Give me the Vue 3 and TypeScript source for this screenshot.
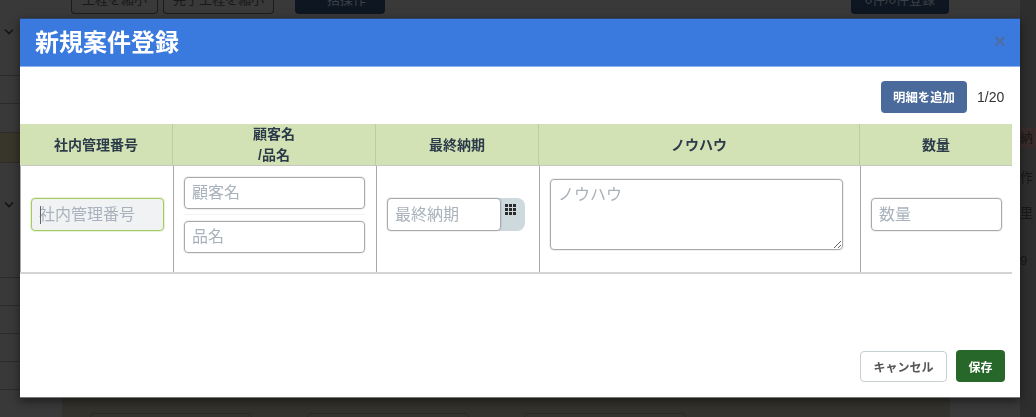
<template>
  <div class="page">
    <div class="backdrop">
      <div class="toolbar">
        <span class="ghost ghost--a">工程を縮小</span>
        <span class="ghost ghost--b">完了工程を縮小</span>
        <span class="ghost ghost--dark ghost--c">一括操作</span>
        <span class="ghost ghost--dark ghost--d">0件/0件登録</span>
      </div>
      <div class="rows">
        <div
          v-for="row in bgRows"
          :key="row.y"
          class="bg-row"
          :class="{ 'bg-row--olive': row.olive }"
          :style="{ height: row.h + 'px' }"
        >
          <svg
            v-if="row.chevron"
            class="chevron"
            :style="{ marginTop: row.chevron + 'px' }"
            width="12"
            height="8"
            viewBox="0 0 12 8"
          >
            <path d="M2 1.5l4 4 4-4" fill="none" stroke="#151515" stroke-width="1.6" />
          </svg>
        </div>
      </div>
      <div class="side">
        <span class="side__red">納</span>
        <span class="side__item side__item--work">作</span>
        <span class="side__item side__item--ri">里 2</span>
        <span class="side__item">9</span>
      </div>
      <div class="bottom">
        <span class="bottom__box"></span>
        <span class="bottom__box"></span>
        <span class="bottom__box"></span>
      </div>
    </div>

    <section class="modal">
      <header class="modal__head">
        <h1 class="modal__title">新規案件登録</h1>
        <span class="modal__close">×</span>
      </header>

      <div class="modal__body">
        <div class="add-row">
          <button class="btn btn--add">明細を追加</button>
          <span class="count">1/20</span>
        </div>

        <div class="grid grid--head">
          <div v-for="col in headers" :key="col" class="th">{{ col }}</div>
        </div>
        <div class="grid grid--body">
          <div class="td">
            <input class="control control--focus" placeholder="社内管理番号" />
            <span class="caret"></span>
          </div>
          <div class="td td--stack">
            <input class="control control--tall" placeholder="顧客名" />
            <hr class="rule" />
            <input class="control control--tall" placeholder="品名" />
          </div>
          <div class="td td--date">
            <div class="date">
              <input class="control" placeholder="最終納期" />
              <span class="date__addon">
                <svg width="11" height="11" viewBox="0 0 11 11" fill="#2a2a2a">
                  <rect v-for="c in calendarCells" :key="c.x + '-' + c.y" :x="c.x" :y="c.y" width="3" height="3" />
                </svg>
              </span>
            </div>
          </div>
          <div class="td td--area">
            <textarea class="control control--area" placeholder="ノウハウ"></textarea>
          </div>
          <div class="td td--qty">
            <input class="control" placeholder="数量" />
          </div>
        </div>
      </div>

      <footer class="modal__foot">
        <button class="btn btn--cancel">キャンセル</button>
        <button class="btn btn--save">保存</button>
      </footer>
    </section>
  </div>
</template>

<script setup lang="ts">
const headers = ['社内管理番号', '顧客名\n/品名', '最終納期', 'ノウハウ', '数量']

const bgRows = [
  { y: 0, h: 59, chevron: 11 },
  { y: 1, h: 28 },
  { y: 2, h: 29 },
  { y: 3, h: 30, olive: true },
  { y: 4, h: 115, chevron: 38 },
  { y: 5, h: 28 },
  { y: 6, h: 28 },
  { y: 7, h: 28 },
  { y: 8, h: 28 },
]

const calendarCells = [0, 4, 8].flatMap((y) => [0, 4, 8].map((x) => ({ x, y })))
</script>

<style>
body {
  margin: 0;
  background: #393939;
}
</style>

<style scoped>
.page {
  position: relative;
  width: 1036px;
  height: 417px;
  overflow: hidden;
  font-family: "Liberation Sans", "Noto Sans CJK JP", sans-serif;
}

.backdrop {
  position: absolute;
  inset: 0;
  background: #393939;
  filter: blur(0.5px);
}

.toolbar {
  display: flex;
  height: 14px;
  padding-left: 71px;
  color: #181818;
  font-size: 13px;
  line-height: 0;
}

.ghost {
  box-sizing: border-box;
  height: 14px;
  margin-right: 5px;
  border: 1px solid #1c1c1c;
  border-top: 0;
  border-radius: 0 0 4px 4px;
  text-align: center;
  overflow: hidden;
}

.ghost--a { width: 87px; }
.ghost--b { width: 111px; margin-right: 21px; }
.ghost--c { width: 90px; margin-right: 466px; }
.ghost--d { width: 98px; }

.ghost--dark {
  background: #0e1721;
  border-color: #0e1721;
  color: #3c4148;
}

.rows {
  width: 20px;
  margin-top: 3px;
}

.bg-row {
  box-sizing: border-box;
  display: flex;
  align-items: flex-start;
  border-bottom: 1px solid #2c2c2c;
}

.bg-row--olive {
  background: #38362a;
}

.chevron {
  margin-left: 3px;
}

.side {
  position: absolute;
  top: 0;
  right: 0;
  bottom: 0;
  width: 16px;
  display: flex;
  flex-direction: column;
  padding-top: 128px;
  background: #2e2e2e;
  color: #181818;
  font-size: 13px;
  white-space: nowrap;
}

.side__red {
  height: 20px;
  line-height: 20px;
  margin-bottom: 19px;
  background: #3a2c2c;
}

.side__item {
  height: 22px;
  line-height: 22px;
}

.side__item--work {
  margin-bottom: 13px;
}

.side__item--ri {
  margin-bottom: 26px;
}

.bottom {
  position: absolute;
  left: 62px;
  width: 888px;
  top: 398px;
  height: 19px;
  box-sizing: border-box;
  display: flex;
  gap: 55px;
  padding: 15px 0 0 28px;
  background: #33322d;
}

.bottom__box {
  width: 160px;
  height: 10px;
  border: 1px solid #2a2a27;
  border-radius: 4px;
}

.modal {
  position: absolute;
  left: 20px;
  top: 18px;
  box-sizing: border-box;
  width: 1000px;
  height: 380px;
  display: flex;
  flex-direction: column;
  background: #fff;
  box-shadow: 0 3px 9px rgba(0, 0, 0, 0.5);
  border-top: 1px solid #26446f;
  border-bottom: 1px solid #777;
}

.modal__head {
  display: flex;
  align-items: center;
  justify-content: space-between;
  height: 48px;
  box-sizing: border-box;
  padding: 0 15px;
  background: #3a79de;
  border-bottom: 1px solid #8fb3ea;
}

.modal__title {
  margin: 0;
  color: #fff;
  font-size: 24px;
  font-weight: 700;
  line-height: 46px;
}

.modal__close {
  position: relative;
  top: -2px;
  left: 1px;
  color: #4d6ea3;
  font-size: 21px;
  font-weight: 700;
}

.modal__body {
  flex: 1;
  padding: 14px 8px 0 0;
}

.add-row {
  display: flex;
  align-items: flex-start;
  justify-content: flex-end;
  gap: 10px;
  height: 33px;
  margin-bottom: 10px;
  padding-right: 7px;
}

.count {
  width: 28px;
  height: 32px;
  color: #333;
  font-size: 14px;
  line-height: 32px;
}

.btn {
  box-sizing: border-box;
  border: 1px solid transparent;
  border-radius: 4px;
  font-family: inherit;
  font-size: 12px;
  font-weight: 700;
  padding: 0;
}

.btn--add {
  width: 86px;
  height: 32px;
  background: #4a6a9b;
  color: #fff;
  font-size: 12.4px;
}

.grid {
  display: grid;
  grid-template-columns: 153px 203px 163px 321px 152px;
}

.grid--head {
  height: 42px;
  background: #d3e2b5;
  border-bottom: 1px solid #c6c6c6;
  box-sizing: border-box;
}

.th {
  display: flex;
  align-items: center;
  justify-content: center;
  box-sizing: border-box;
  border-right: 1px solid #bccda0;
  color: #2c3b4a;
  font-size: 14px;
  font-weight: 700;
  line-height: 21px;
  text-align: center;
  white-space: pre-line;
}

.th:last-child {
  border-right: 0;
}

.grid--body {
  height: 108px;
  box-sizing: border-box;
  border-bottom: 2px solid #d4d4d4;
}

.td {
  position: relative;
  box-sizing: border-box;
  display: flex;
  align-items: flex-start;
  padding: 32px 9px 0 10px;
  border-left: 1px solid #a8a8a8;
}

.td--stack {
  flex-direction: column;
  padding: 11px 11px 0 10px;
}

.td--date {
  padding-left: 10px;
}

.td--area {
  padding: 13px 10px 0;
}

.td--qty {
  padding: 32px 10px 0;
}

.control {
  box-sizing: border-box;
  display: block;
  width: 100%;
  height: 33px;
  padding: 0 7px;
  border: 1px solid #a9a9a9;
  border-radius: 4px;
  background: #fff;
  box-shadow: 0 0 0 1px rgba(0, 0, 0, 0.06);
  color: #333;
  font-family: inherit;
  font-size: 16px;
  outline: none;
}

.control::placeholder {
  color: #a9b2bc;
  opacity: 1;
}

.control--focus {
  background: #f1f2f4;
  border-color: #a3cb62;
  box-shadow: 0 0 0 1px rgba(163, 203, 98, 0.25);
}

.caret {
  position: absolute;
  left: 19px;
  top: 40px;
  width: 1px;
  height: 18px;
  background: #5a6570;
}

.control--tall {
  height: 32px;
}

.rule {
  width: 100%;
  height: 1px;
  margin: 5px 0 6px;
  border: 0;
  background: #f3f3f3;
}

.control--area {
  width: 293px;
  height: 71px;
  padding-top: 1px;
  resize: vertical;
}

.date {
  display: flex;
  width: 138px;
  height: 33px;
  border-radius: 4px 8px 8px 4px;
  background: #cdd9dd;
}

.date .control {
  width: 114px;
  flex: none;
}

.date__addon {
  flex: 1;
  display: flex;
  justify-content: center;
  padding: 6px 5px 0 0;
  box-sizing: border-box;
}

.modal__foot {
  display: flex;
  justify-content: flex-end;
  align-items: center;
  gap: 9px;
  padding: 0 15px 15px 0;
}

.btn--cancel {
  width: 87px;
  height: 31px;
  background: #fff;
  border-color: #c8cfd3;
  color: #555;
}

.btn--save {
  width: 49px;
  height: 32px;
  background: #27682a;
  color: #fff;
}
</style>
